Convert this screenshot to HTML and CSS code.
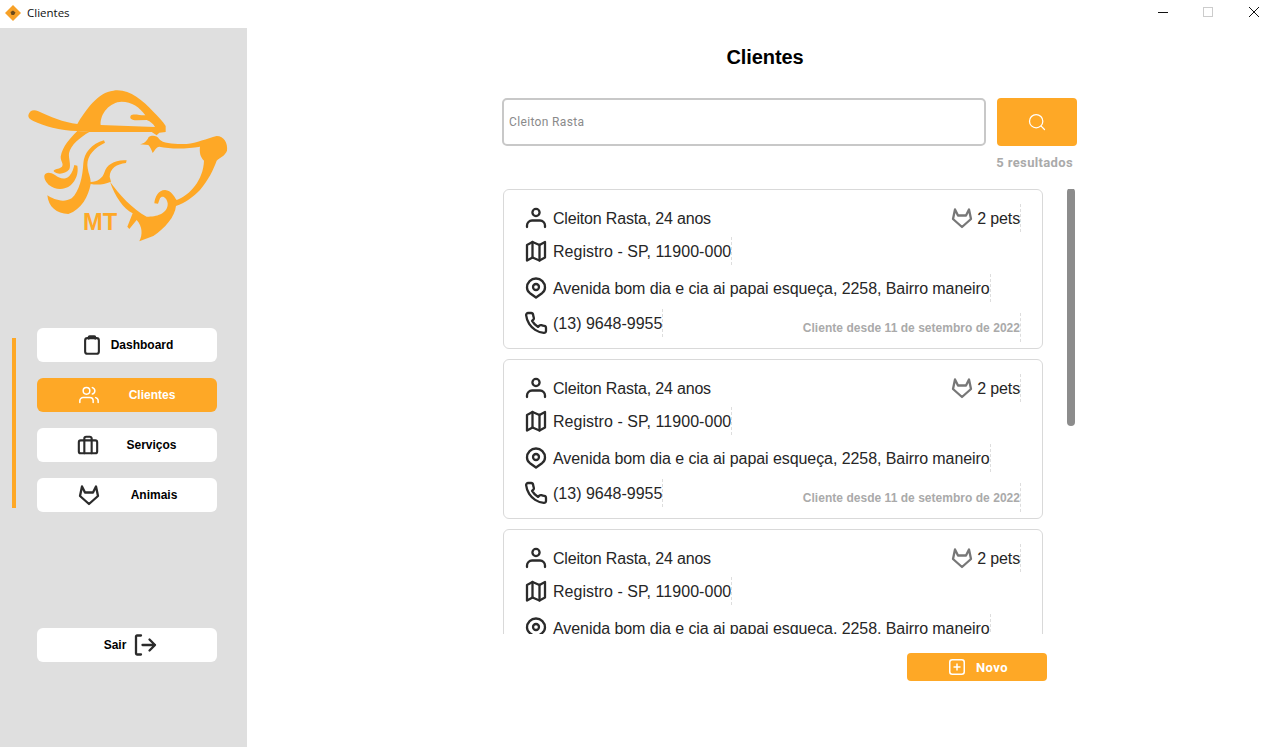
FILE: index.html
```html
<!DOCTYPE html>
<html lang="pt-BR">
<head>
<meta charset="utf-8">
<title>Clientes</title>
<link rel="stylesheet" href="styles.css">
</head>
<body>
<svg class="defs" width="0" height="0" aria-hidden="true">
  <symbol id="i-user" viewBox="0 0 24 24"><circle cx="12" cy="6.500" r="3.600"/><path d="M3 21v-1.500a5 5 0 0 1 5-5h8a5 5 0 0 1 5 5V21"/></symbol>
  <symbol id="i-map" viewBox="0 0 24 24"><path d="M3 6 8.500 3 15.500 6 21 3V18.500L15.500 21.500 8.500 18.500 3 21.500Z"/><path d="M8.500 3V18.500M15.500 6V21.500"/></symbol>
  <symbol id="i-pin" viewBox="0 0 24 24"><path d="M12 21.500 6 17.200C3.800 15.500 3 13.500 3 11.500a9 9 0 0 1 18 0C21 13.500 20.200 15.500 18 17.200Z"/><circle cx="12" cy="11" r="3"/></symbol>
  <symbol id="i-phone" viewBox="0 0 24 24"><path d="M22 16.920v3a2 2 0 0 1-2.180 2 19.790 19.790 0 0 1-8.630-3.070 19.500 19.500 0 0 1-6-6 19.790 19.790 0 0 1-3.070-8.670A2 2 0 0 1 4.110 2h3a2 2 0 0 1 2 1.720 12.840 12.840 0 0 0 .7 2.810 2 2 0 0 1-.45 2.110L8.090 9.910a16 16 0 0 0 6 6l1.270-1.270a2 2 0 0 1 2.110-.45 12.840 12.840 0 0 0 2.810.7A2 2 0 0 1 22 16.920z"/></symbol>
  <symbol id="i-fox" viewBox="0 0 24 24"><path d="M3 13 5 3.500 8 9.500H16L19 3.500 21 13 12 21Z"/></symbol>
  <symbol id="i-clip" viewBox="0 0 24 24"><rect x="4.500" y="4.500" width="15" height="17" rx="2.500"/><path d="M8.500 5V3.500a1 1 0 0 1 1-1h5a1 1 0 0 1 1 1V5"/></symbol>
  <symbol id="i-users" viewBox="0 0 24 24"><path d="M17 21v-2a4 4 0 0 0-4-4H5a4 4 0 0 0-4 4v2"/><circle cx="9" cy="7" r="4"/><path d="M23 21v-2a4 4 0 0 0-3-3.870M16 3.130a4 4 0 0 1 0 7.750"/></symbol>
  <symbol id="i-case" viewBox="0 0 24 24"><rect x="2" y="7" width="20" height="14" rx="2"/><path d="M16 21V5a2 2 0 0 0-2-2h-4a2 2 0 0 0-2 2v16"/></symbol>
  <symbol id="i-out" viewBox="0 0 24 24"><path d="M8 2.500H4a1 1 0 0 0-1 1v17a1 1 0 0 0 1 1h4M9.500 12H22M16.500 6.500 22 12 16.500 17.500"/></symbol>
</svg>

<header class="titlebar">
  <svg class="app-icon" viewBox="0 0 16 16"><path class="app-icon-bg" d="M8 0 16 8 8 16 0 8Z"/><path class="app-icon-fg" d="M5.500 7 8 5.500 10.500 7.500 9 10H6.500Z"/></svg>
  <span class="app-name">Clientes</span>
  <div class="win-controls">
    <svg class="win-btn" viewBox="0 0 46 28"><path class="win-line" d="M19 12.500H29"/></svg>
    <svg class="win-btn" viewBox="0 0 46 28"><rect class="win-off" x="19.500" y="7.500" width="9" height="9"/></svg>
    <svg class="win-btn" viewBox="0 0 46 28"><path class="win-line" d="M19 7 29 17M29 7 19 17"/></svg>
  </div>
</header>

<div class="app">
  <aside class="sidebar">
    <svg class="logo" viewBox="0 84 741 696">
      <path fill-rule="evenodd" d="M85 346C88 332 100 327 115 334 150 350 190 368 232 372 255 332 295 275 340 272 385 265 425 298 460 335 475 350 490 365 497 378L497 396 478 398 470 406 455 396 268 396 232 393C180 392 130 378 100 363 90 358 84 354 85 346ZM302 375C300 340 330 306 365 305 395 305 420 322 436 346 420 347 400 340 392 347 388 356 395 360 410 361L440 360C452 365 460 372 465 381Z"/>
      <path d="M232 393C210 415 187 440 182 470 182 485 192 490 186 500 178 508 160 506 161 514 170 524 195 524 208 508 214 495 205 475 207 460 212 435 240 412 268 396Z"/>
      <path d="M133 527C137 516 150 516 165 525 180 537 195 540 208 528 218 518 220 505 223 495L232 497C236 520 228 540 212 556 192 572 165 570 148 556 140 548 132 538 133 527Z"/>
      <path d="M142 586C160 598 190 610 215 595 238 575 248 530 250 490 252 460 275 430 312 421L315 428C285 442 262 465 262 495 264 520 272 530 272 546 292 545 308 535 314 515 320 495 345 478 380 481L378 489C350 492 330 505 329 530L333 545C310 555 290 555 272 552 265 590 245 628 205 642 170 642 145 620 142 586Z"/>
      <path d="M420 433C430 431 440 425 446 411 455 406 470 405 478 418 490 432 530 433 560 432 590 430 620 415 650 408 672 408 684 430 681 452 675 468 660 472 650 482 640 510 625 540 600 570 580 590 555 610 528 618 525 650 495 685 460 708L418 724C428 705 428 680 410 660L388 687 382 680 398 640C370 625 345 590 330 545 355 580 400 630 440 650 470 652 505 640 503 610 500 590 485 585 480 595L474 611 463 610C465 590 475 570 495 570 515 572 522 590 530 600 570 585 610 540 612 482 600 470 598 455 600 440 560 447 510 447 478 440 468 442 465 450 458 459 455 450 450 440 445 435Z"/>
      <text class="logo-text" x="249" y="690">MT</text>
    </svg>

    <nav class="nav">
      <div class="nav-bar"></div>
      <div class="nav-list">
        <a class="nav-btn btn-dash"><svg class="nav-icon icon"><use href="#i-clip"/></svg><span>Dashboard</span></a>
        <a class="nav-btn nav-btn-active btn-cli"><svg class="nav-icon icon"><use href="#i-users"/></svg><span>Clientes</span></a>
        <a class="nav-btn btn-serv"><svg class="nav-icon icon"><use href="#i-case"/></svg><span>Serviços</span></a>
        <a class="nav-btn btn-ani"><svg class="nav-icon icon"><use href="#i-fox"/></svg><span>Animais</span></a>
      </div>
    </nav>

    <a class="nav-btn exit-btn"><span>Sair</span><svg class="nav-icon icon"><use href="#i-out"/></svg></a>
  </aside>

  <main class="main">
    <h1 class="title">Clientes</h1>
    <div class="search-row">
      <div class="search-input">Cleiton Rasta</div>
      <button class="search-btn"><svg class="search-icon" viewBox="0 0 24 24"><circle cx="11" cy="11" r="8"/><path d="M17 17 21 21"/></svg></button>
    </div>
    <p class="results">5 resultados</p>

    <div class="list-area">
      <div class="cards">
        <article class="card">
          <div class="row row-first">
            <span class="info"><svg class="icon row-icon"><use href="#i-user"/></svg><span class="txt txt-name">Cleiton Rasta, 24 anos</span></span>
            <span class="info"><svg class="icon row-icon pet-icon"><use href="#i-fox"/></svg><span class="txt txt-pets mark">2 pets</span></span>
          </div>
          <div class="row row-second"><span class="info"><svg class="icon row-icon"><use href="#i-map"/></svg><span class="txt txt-region mark">Registro - SP, 11900-000</span></span></div>
          <div class="row row-third"><span class="info"><svg class="icon row-icon"><use href="#i-pin"/></svg><span class="txt txt-addr mark">Avenida bom dia e cia ai papai esqueça, 2258, Bairro maneiro</span></span></div>
          <div class="row row-fourth">
            <span class="info"><svg class="icon row-icon"><use href="#i-phone"/></svg><span class="txt mark">(13) 9648-9955</span></span>
            <span class="since mark">Cliente desde 11 de setembro de 2022</span>
          </div>
        </article>
        <article class="card">
          <div class="row row-first">
            <span class="info"><svg class="icon row-icon"><use href="#i-user"/></svg><span class="txt txt-name">Cleiton Rasta, 24 anos</span></span>
            <span class="info"><svg class="icon row-icon pet-icon"><use href="#i-fox"/></svg><span class="txt txt-pets mark">2 pets</span></span>
          </div>
          <div class="row row-second"><span class="info"><svg class="icon row-icon"><use href="#i-map"/></svg><span class="txt txt-region mark">Registro - SP, 11900-000</span></span></div>
          <div class="row row-third"><span class="info"><svg class="icon row-icon"><use href="#i-pin"/></svg><span class="txt txt-addr mark">Avenida bom dia e cia ai papai esqueça, 2258, Bairro maneiro</span></span></div>
          <div class="row row-fourth">
            <span class="info"><svg class="icon row-icon"><use href="#i-phone"/></svg><span class="txt mark">(13) 9648-9955</span></span>
            <span class="since mark">Cliente desde 11 de setembro de 2022</span>
          </div>
        </article>
        <article class="card">
          <div class="row row-first">
            <span class="info"><svg class="icon row-icon"><use href="#i-user"/></svg><span class="txt txt-name">Cleiton Rasta, 24 anos</span></span>
            <span class="info"><svg class="icon row-icon pet-icon"><use href="#i-fox"/></svg><span class="txt txt-pets mark">2 pets</span></span>
          </div>
          <div class="row row-second"><span class="info"><svg class="icon row-icon"><use href="#i-map"/></svg><span class="txt txt-region mark">Registro - SP, 11900-000</span></span></div>
          <div class="row row-third"><span class="info"><svg class="icon row-icon"><use href="#i-pin"/></svg><span class="txt txt-addr mark">Avenida bom dia e cia ai papai esqueça, 2258, Bairro maneiro</span></span></div>
        </article>
      </div>
      <div class="scrollbar"></div>
    </div>

    <button class="new-btn"><svg class="new-icon" viewBox="0 0 16 16"><rect x="0.750" y="0.750" width="14.500" height="14.500" rx="2.500"/><path d="M8 4.500V11.500M4.500 8H11.500"/></svg><span>Novo</span></button>
  </main>
</div>
</body>
</html>
```
FILE: styles.css
```css
* { box-sizing: border-box; }
html, body { margin: 0; padding: 0; }
body {
  width: 1276px;
  height: 747px;
  overflow: hidden;
  background: #fff;
  font-family: "Liberation Sans", Arial, sans-serif;
  color: #222;
}
.defs { position: absolute; }

/* title bar */
.titlebar { display: flex; align-items: center; height: 28px; padding-left: 5px; background: #fff; }
.app-icon { width: 16px; height: 16px; margin-top: -3px; }
.app-icon-bg { fill: #f7a128; }
.app-icon-fg { fill: #6b4a1c; }
.app-name { margin-left: 6px; margin-top: -3px; font: 11.500px "Open Sans", sans-serif; color: #111; }
.win-controls { display: flex; margin-left: auto; }
.win-btn { display: block; width: 46px; height: 28px; margin-top: -1px; }
.win-controls .win-btn:first-child { margin-right: -1px; }
.win-line { fill: none; stroke: #111; stroke-width: 1; }
.win-off { fill: none; stroke: #ccc; stroke-width: 1; }

/* shell */
.app { display: flex; height: 719px; }
.sidebar { width: 247px; flex: none; background: #dfdfdf; }
.logo { display: block; width: 247px; height: 232px; fill: #fea826; }
.logo-text { font: bold 71px "Liberation Sans", Arial, sans-serif; }

.icon { fill: none; stroke: currentColor; stroke-width: 2; stroke-linecap: round; stroke-linejoin: round; }

/* navigation */
.nav { display: flex; margin-top: 68px; padding-left: 12px; }
.nav-bar { width: 4px; height: 170px; margin-top: 10px; background: #fea826; }
.nav-list { display: flex; flex-direction: column; gap: 16px; margin-left: 21px; }
.nav-btn {
  display: flex;
  align-items: center;
  justify-content: center;
  width: 180px;
  height: 34px;
  border-radius: 6px;
  background: #fff;
  color: #000;
  font-size: 12px;
  font-weight: bold;
}
.nav-btn-active { background: #fea826; color: #fff; }
.nav-icon { width: 24px; height: 24px; color: #2b2b2b; stroke-width: 2.300; }
.nav-btn-active .nav-icon { color: #fff; stroke-width: 1.800; }
.btn-dash { gap: 8px; }
.btn-dash .nav-icon { width: 22px; height: 22px; }
.btn-cli { gap: 30px; }
.btn-cli .nav-icon { width: 20px; height: 20px; }
.btn-serv { gap: 27px; }
.btn-serv .nav-icon { width: 22px; height: 22px; }
.btn-ani { gap: 30px; }
.exit-btn { gap: 7px; margin: 116px 0 0 37px; padding-left: 7px; }

/* main */
.main { flex: 1; padding-left: 255px; }
.title { width: 526px; height: 58px; margin: 0 0 12px; font-size: 20px; line-height: 58px; letter-spacing: -0.100px; font-weight: bold; color: #000; text-align: center; }
.search-row { display: flex; gap: 11px; width: 575px; height: 48px; }
.search-input {
  flex: 1;
  display: flex;
  align-items: center;
  padding-left: 5px;
  border: 2px solid #c8c8c8;
  border-radius: 5px;
  font: 12px Roboto, sans-serif;
  letter-spacing: 0.350px;
  color: #8a8a8a;
}
.search-btn { display: flex; align-items: center; justify-content: center; width: 80px; padding: 0; border: 0; border-radius: 4px; background: #fea826; }
.search-icon { width: 20px; height: 20px; fill: none; stroke: #fff; stroke-width: 1.500; stroke-linecap: round; }
.results { width: 575px; height: 43px; margin: 0; padding: 9px 4px 0 0; font: bold 13px/15px Roboto, sans-serif; letter-spacing: 0.350px; color: #aaa; text-align: right; }

/* list */
.list-area { display: flex; gap: 24px; width: 575px; height: 445px; padding-left: 1px; overflow: hidden; }
.cards { display: flex; flex-direction: column; gap: 10px; width: 540px; flex: none; }
.card { flex: none; height: 160px; padding: 14px 21px 0 20px; border: 1px solid #d9d9d9; border-radius: 6px; background: #fff; }
.row { display: flex; justify-content: space-between; height: 28px; }
.row-second { margin-top: 5px; }
.row-third { margin-top: 9px; }
.row-fourth { margin-top: 7px; }
.info { display: flex; align-items: center; }
.row-icon { width: 24px; height: 24px; color: #2b2b2b; stroke-width: 2.300; }
.pet-icon { color: #777; }
.txt { display: flex; align-items: center; height: 28px; margin-left: 5px; padding-top: 2px; font-size: 16px; color: #262626; }
.txt-name { letter-spacing: -0.180px; }
.txt-addr { letter-spacing: -0.070px; }
.txt-region { letter-spacing: 0.040px; }
.txt-pets { margin-left: 3px; letter-spacing: -0.150px; }
.mark { border-right: 1px dashed #ddd; }
.since { display: flex; align-items: center; height: 29px; margin-top: 4px; font-size: 12px; font-weight: bold; letter-spacing: 0.030px; color: #aaa; }
.scrollbar { width: 8px; height: 238px; margin-top: -1px; border-radius: 4px; background: #8c8c8c; }

/* new */
.new-btn {
  display: flex;
  align-items: center;
  justify-content: center;
  gap: 11px;
  width: 140px;
  height: 28px;
  margin: 19px 0 0 405px;
  padding: 0 0 0 3px;
  border: 0;
  border-radius: 4px;
  background: #fea826;
  color: #fff;
  font: bold 13px Roboto, sans-serif;
  letter-spacing: 0.500px;
}
.new-icon { width: 16px; height: 16px; fill: none; stroke: #fff; stroke-width: 1.500; }
```
